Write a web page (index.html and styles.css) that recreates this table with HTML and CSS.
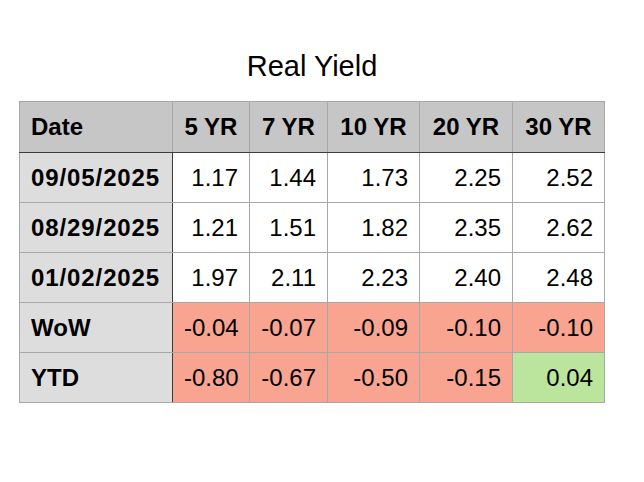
FILE: index.html
```html
<!DOCTYPE html>
<html>
<head>
<meta charset="utf-8">
<link rel="stylesheet" href="styles.css">
</head>
<body>
<div class="page">
  <div class="block">
    <h1 class="title">Real Yield</h1>
    <table class="yield">
      <colgroup>
        <col class="c-date"><col class="c-5"><col class="c-7"><col class="c-10"><col class="c-20"><col class="c-30">
      </colgroup>
      <thead>
        <tr class="head">
          <th class="lbl">Date</th><th>5 YR</th><th>7 YR</th><th>10 YR</th><th>20 YR</th><th>30 YR</th>
        </tr>
      </thead>
      <tbody>
        <tr><th class="lbl date">09/05/2025</th><td>1.17</td><td>1.44</td><td>1.73</td><td>2.25</td><td>2.52</td></tr>
        <tr><th class="lbl date">08/29/2025</th><td>1.21</td><td>1.51</td><td>1.82</td><td>2.35</td><td>2.62</td></tr>
        <tr><th class="lbl date">01/02/2025</th><td>1.97</td><td>2.11</td><td>2.23</td><td>2.40</td><td>2.48</td></tr>
        <tr><th class="lbl">WoW</th><td class="neg">-0.04</td><td class="neg">-0.07</td><td class="neg">-0.09</td><td class="neg">-0.10</td><td class="neg">-0.10</td></tr>
        <tr><th class="lbl">YTD</th><td class="neg">-0.80</td><td class="neg">-0.67</td><td class="neg">-0.50</td><td class="neg">-0.15</td><td class="pos">0.04</td></tr>
      </tbody>
    </table>
  </div>
</div>
</body>
</html>
```

FILE: styles.css
```css
html, body {
  margin: 0;
  padding: 0;
  background: #ffffff;
}
body {
  font-family: "Liberation Sans", Arial, Helvetica, sans-serif;
  color: #000;
}
.page {
  width: 644px;
  height: 482px;
  padding: 50px 0 0 19px;
  box-sizing: border-box;
}
.block {
  width: 586px;
}
.title {
  margin: 0 0 18px 0;
  height: 33px;
  line-height: 33px;
  font-size: 29px;
  font-weight: normal;
  text-align: center;
}
.yield {
  border-collapse: collapse;
  table-layout: fixed;
  width: 586px;
  font-size: 24px;
}
.c-date { width: 153px; }
.c-5 { width: 77px; }
.c-7 { width: 78px; }
.c-10 { width: 92px; }
.c-20 { width: 93px; }
.c-30 { width: 92px; }
.yield th, .yield td {
  border: 1px solid #a8a8a8;
  height: 50px;
  padding: 0 11px;
  box-sizing: border-box;
  white-space: nowrap;
}
.yield td {
  text-align: right;
  background: #ffffff;
}
.yield th {
  text-align: left;
  font-weight: bold;
}
.yield th.date {
  letter-spacing: 0.9px;
}
.head th {
  background: #c6c6c6;
  height: 51px;
  border-bottom: 1px solid #3c3c3c;
}
.head th:not(.lbl) {
  text-align: center;
}
.yield tbody th.lbl {
  background: #dddddd;
  border-right: 1px solid #3c3c3c;
}
.yield td.neg { background: #f9a491; }
.yield td.pos { background: #bbe59d; }
```
